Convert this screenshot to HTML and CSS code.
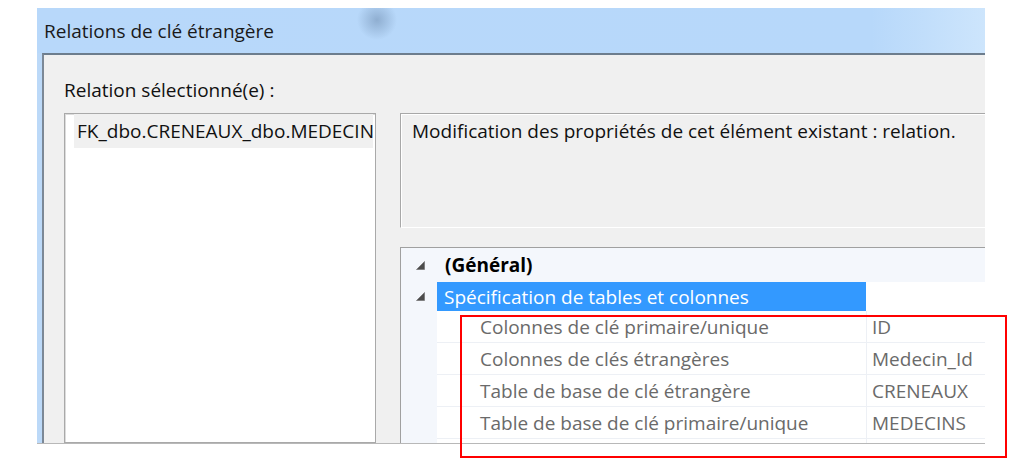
FILE: index.html
```html
<!DOCTYPE html>
<html lang="fr">
<head>
<meta charset="utf-8">
<title>Relations de clé étrangère</title>
<link rel="stylesheet" href="styles.css">
</head>
<body>
<div class="window">
  <div class="titlebar"><span class="title">Relations de clé étrangère</span></div>
  <div class="client">
    <div class="label">Relation sélectionné(e) :</div>
    <div class="panes">
      <div class="list">
        <div class="item">FK_dbo.CRENEAUX_dbo.MEDECINS</div>
      </div>
      <div class="right">
        <div class="desc">Modification des propriétés de cet élément existant : relation.</div>
        <div class="grid">
          <div class="row cat general">
            <span class="gutter"><svg class="tri" width="9" height="9" viewBox="0 0 9 9"><polygon points="8.5,0.5 8.5,8.5 0.5,8.5"/></svg></span>
            <span class="name">(Général)</span>
          </div>
          <div class="row cat spec">
            <span class="gutter"><svg class="tri" width="9" height="9" viewBox="0 0 9 9"><polygon points="8.5,0.5 8.5,8.5 0.5,8.5"/></svg></span>
            <span class="name">Spécification de tables et colonnes</span>
            <span class="value"></span>
          </div>
          <div class="row prop">
            <span class="gutter"></span>
            <span class="name">Colonnes de clé primaire/unique</span>
            <span class="value">ID</span>
          </div>
          <div class="row prop">
            <span class="gutter"></span>
            <span class="name">Colonnes de clés étrangères</span>
            <span class="value">Medecin_Id</span>
          </div>
          <div class="row prop">
            <span class="gutter"></span>
            <span class="name">Table de base de clé étrangère</span>
            <span class="value">CRENEAUX</span>
          </div>
          <div class="row prop">
            <span class="gutter"></span>
            <span class="name">Table de base de clé primaire/unique</span>
            <span class="value">MEDECINS</span>
          </div>
          <div class="row prop">
            <span class="gutter"></span>
            <span class="name"></span>
            <span class="value"></span>
          </div>
        </div>
      </div>
    </div>
  </div>
</div>
<div class="highlight"></div>
</body>
</html>
```

FILE: styles.css
```css
html, body {
  margin: 0;
  padding: 0;
  background: #ffffff;
}
body {
  font-family: "Open Sans", "Noto Sans", sans-serif;
  font-size: 19px;
  color: #111;
  width: 1021px;
  height: 465px;
  overflow: hidden;
}
.window {
  margin: 8px 0 0 37px;
  width: 948px;
  height: 435px;
  border-bottom: 1px solid #b8b8b8;
  background: #bcd9f8;
  display: flex;
  flex-direction: column;
  overflow: hidden;
}
.titlebar {
  height: 45px;
  flex: none;
  display: flex;
  align-items: center;
  padding-left: 7px;
  background:
    radial-gradient(circle 20px at 340px 12px, rgba(110, 140, 175, 0.55), rgba(110, 140, 175, 0) 100%),
    linear-gradient(90deg, #b8d8fa 0%, #b7d8fa 88%, #cde5fc 100%);
}
.title {
  font-size: 19px;
  color: #1a1a1a;
}
.client {
  flex: 1;
  margin-left: 5px;
  border-left: 2px solid #7c8896;
  border-top: 2px solid #6d7d8d;
  background: #f0f0f0;
  padding: 24px 0 0 20px;
  display: flex;
  flex-direction: column;
  overflow: hidden;
  min-height: 0;
}
.label {
  line-height: 22px;
  height: 22px;
  margin-bottom: 12px;
}
.panes {
  flex: 1;
  display: flex;
  gap: 24px;
  min-height: 0;
}
.list {
  flex: none;
  width: 312px;
  box-sizing: border-box;
  border: 1px solid #a9a9a9;
  box-shadow: inset 1px 1px 0 #dcdcdc;
  background: #ffffff;
}
.item {
  margin-left: 9px;
  width: 299px;
  box-sizing: border-box;
  height: 34px;
  line-height: 34px;
  padding-left: 3px;
  background: #f0f0f0;
  white-space: nowrap;
  overflow: hidden;
}
.right {
  flex: none;
  width: 640px;
  display: flex;
  flex-direction: column;
}
.desc {
  flex: none;
  height: 115px;
  box-sizing: border-box;
  border-top: 1px solid #a8a8a8;
  border-left: 1px solid #a8a8a8;
  border-bottom: 1px solid #ffffff;
  box-shadow: inset 1px 1px 0 #ffffff;
  padding: 6px 0 0 11px;
  line-height: 22px;
  margin-bottom: 19px;
}
.grid {
  flex: 1;
  border-top: 1px solid #a0a0a0;
  border-left: 1px solid #a0a0a0;
  background: #ffffff;
}
.row {
  display: flex;
  box-sizing: border-box;
}
.gutter {
  flex: none;
  width: 36px;
  background: #f4f7fc;
  display: flex;
  align-items: center;
  padding-left: 15px;
  box-sizing: border-box;
}
.tri {
  display: block;
  fill: #4c4c4c;
  stroke: #6a6a6a;
  stroke-width: 0.6;
}
.cat.general {
  height: 34px;
  background: #f4f7fc;
  align-items: stretch;
}
.cat.general .name {
  font-weight: 700;
  padding-left: 8px;
  display: flex;
  align-items: center;
  color: #000;
}
.cat.spec {
  height: 29px;
}
.cat.spec .name {
  width: 429px;
  flex: none;
  background: #3399ff;
  color: #ffffff;
  padding-left: 7px;
  box-sizing: border-box;
  display: flex;
  align-items: center;
}
.cat.spec .value {
  flex: 1;
  background: #ffffff;
}
.prop {
  height: 32px;
}
.prop .name {
  width: 429px;
  flex: none;
  box-sizing: border-box;
  padding-left: 43px;
  color: #6a6a6a;
  border-bottom: 1px solid #edf0f5;
  display: flex;
  align-items: center;
  white-space: nowrap;
}
.prop .value {
  flex: 1;
  box-sizing: border-box;
  padding-left: 5px;
  color: #6a6a6a;
  border-left: 1px solid #edf0f5;
  border-bottom: 1px solid #edf0f5;
  display: flex;
  align-items: center;
  white-space: nowrap;
}
.highlight {
  position: absolute;
  left: 460px;
  top: 315px;
  width: 547px;
  height: 143px;
  box-sizing: border-box;
  border: 2px solid #ff0000;
}
```
